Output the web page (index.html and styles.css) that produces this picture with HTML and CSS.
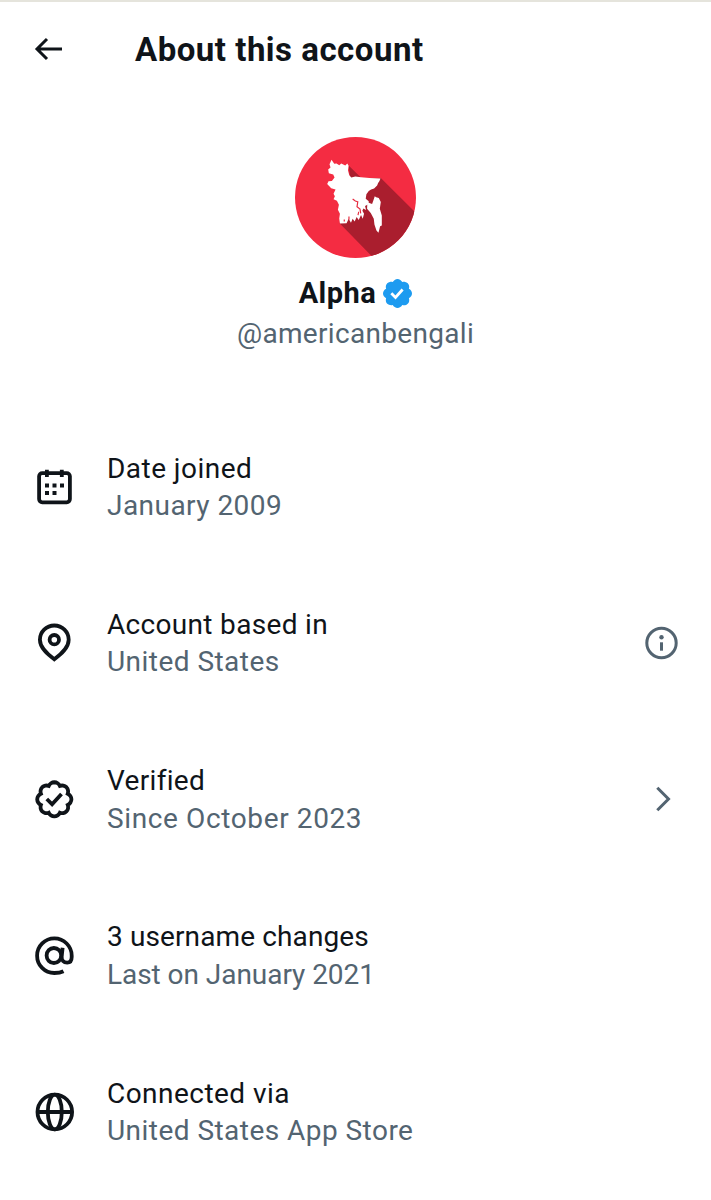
FILE: index.html
```
<!DOCTYPE html>
<html lang="en">
<head>
  <meta charset="UTF-8" />
  <title>About this account</title>
  <link rel="stylesheet" href="styles.css">
</head>
<body>

  <header class="top-bar">
    <svg class="back" viewBox="0 0 30 28"><path d="M13 4L3 14l10 10M3 14h25"/></svg>
    <h1>About this account</h1>
  </header>

  <section class="profile">
    <svg class="avatar" viewBox="30 27 361 361">
      <defs><clipPath id="round"><circle cx="210.500" cy="207.500" r="180.500"/></clipPath></defs>
      <g clip-path="url(#round)">
        <rect x="30" y="27" width="361" height="361" fill="#f42c42"/>
        <path d="M190 112L228 149H286L400 263V400H276L163 284L200 200z" fill="#aa1e2e"/>
      </g>
      <g transform="translate(102 66)">
        <path fill="#fff" d="M37 29L45 41L52 40L60 45L66 40L78 46L84 40L88 47L86 60L90 75L96 82L108 79L125 81L150 83L183 85L180 92L176 98L173 106L164 115L155 118L148 122L141 132L139 145L148 153L147 162L137 167L140 179L132 174L129 181L134 190L130 205L125 194L118 209L112 200L106 213L100 205L95 217L88 205L82 218L62 219L60 204L62 190L56 178L59 163L53 151L43 147L47 138L43 130L49 118L36 114L24 101L28 93L38 92L46 82L42 73L29 69L27 58L34 52L31 42z"/>
        <path fill="#fff" d="M144 156L158 161L162 150L166 138L170 141L178 143L184 155L181 175L187 195L187 225L182 227L177 247L171 240L165 222L163 205L154 188L143 175z"/>
        <path fill="none" stroke="#e62a3e" stroke-width="3.500" d="M100 146l8 6 9 3M115 156l-2 13 9 7 2 13M118 184l-2 10M89 198v10M75 207v6"/>
      </g>
    </svg>
    <div class="name">
      <span>Alpha</span>
      <svg class="badge" viewBox="1.600 1.600 18.800 18.800">
        <path fill="#1d9bf0" d="M20.396 11c-.018-.646-.215-1.275-.57-1.816-.354-.54-.852-.972-1.438-1.246.223-.607.27-1.264.14-1.897-.131-.634-.437-1.218-.882-1.687-.47-.445-1.053-.75-1.687-.882-.633-.13-1.29-.083-1.897.14-.273-.587-.704-1.086-1.245-1.44S11.647 1.620 11 1.604c-.646.017-1.273.213-1.813.568s-.969.854-1.240 1.440c-.608-.223-1.267-.272-1.902-.14-.635.13-1.220.436-1.690.882-.445.470-.749 1.055-.878 1.688-.13.633-.08 1.290.144 1.896-.587.274-1.087.705-1.443 1.245-.356.540-.555 1.170-.574 1.817.02.647.218 1.276.574 1.817.356.540.856.972 1.443 1.245-.224.606-.274 1.263-.144 1.896.13.634.433 1.218.877 1.688.470.443 1.054.747 1.687.878.633.132 1.290.084 1.897-.136.274.586.705 1.084 1.246 1.439.540.354 1.170.551 1.816.569.647-.016 1.276-.213 1.817-.567s.972-.854 1.245-1.440c.604.239 1.266.296 1.903.164.636-.132 1.220-.447 1.680-.907.460-.460.776-1.044.908-1.681s.075-1.299-.165-1.903c.586-.274 1.084-.705 1.439-1.246.354-.540.551-1.170.569-1.816z"/>
        <path fill="none" stroke="#fff" stroke-width="1.800" d="M7 10.900l2.700 2.700 4.600-5.200"/>
      </svg>
    </div>
    <div class="handle">@americanbengali</div>
  </section>

  <main class="rows">
    <div class="row">
      <svg class="icon" viewBox="0 0 44 44">
        <rect x="7.100" y="8.100" width="30.800" height="29.200" rx="3.200"/>
        <path d="M14.900 4.700v7.300M29.800 4.700v7.300"/>
        <path class="solid" d="M13 18.600h4v4h-4zM20.500 18.600h4v4h-4zM28 18.600h4v4h-4zM13 26.100h4v4h-4zM20.500 26.100h4v4h-4z"/>
      </svg>
      <div class="text">
        <div class="label wide">Date joined</div>
        <div class="value wide">January 2009</div>
      </div>
    </div>

    <div class="row">
      <svg class="icon" viewBox="0 0 44 44">
        <path d="M22.300 38.300C16 33.500 7.900 27 7.900 18.700a14.400 14.200 0 0 1 28.800 0C36.700 27 28.600 33.500 22.300 38.300z"/>
        <circle cx="22.300" cy="18.700" r="4.700"/>
      </svg>
      <div class="text">
        <div class="label">Account based in</div>
        <div class="value wide">United States</div>
      </div>
      <svg class="end" viewBox="0 0 34 34">
        <circle cx="16.500" cy="17" r="14.700"/>
        <circle class="dot" cx="16.500" cy="11.200" r="2.200"/>
        <path d="M16.500 16.300v8.400"/>
      </svg>
    </div>

    <div class="row">
      <svg class="icon" viewBox="0 0 44 44">
        <path transform="translate(2.300 1.300) scale(1.820)" stroke-width="2.100" d="M20.396 11c-.018-.646-.215-1.275-.57-1.816-.354-.54-.852-.972-1.438-1.246.223-.607.27-1.264.14-1.897-.131-.634-.437-1.218-.882-1.687-.47-.445-1.053-.75-1.687-.882-.633-.13-1.29-.083-1.897.14-.273-.587-.704-1.086-1.245-1.44S11.647 1.620 11 1.604c-.646.017-1.273.213-1.813.568s-.969.854-1.240 1.440c-.608-.223-1.267-.272-1.902-.14-.635.13-1.220.436-1.690.882-.445.470-.749 1.055-.878 1.688-.13.633-.08 1.290.144 1.896-.587.274-1.087.705-1.443 1.245-.356.540-.555 1.170-.574 1.817.02.647.218 1.276.574 1.817.356.540.856.972 1.443 1.245-.224.606-.274 1.263-.144 1.896.13.634.433 1.218.877 1.688.470.443 1.054.747 1.687.878.633.132 1.290.084 1.897-.136.274.586.705 1.084 1.246 1.439.540.354 1.170.551 1.816.569.647-.016 1.276-.213 1.817-.567s.972-.854 1.245-1.440c.604.239 1.266.296 1.903.164.636-.132 1.220-.447 1.680-.907.460-.460.776-1.044.908-1.681s.075-1.299-.165-1.903c.586-.274 1.084-.705 1.439-1.246.354-.540.551-1.170.569-1.816z"/>
        <path d="M14.800 21l5.300 5.300 9.400-10.300"/>
      </svg>
      <div class="text">
        <div class="label">Verified</div>
        <div class="value wider">Since October 2023</div>
      </div>
      <svg class="end" viewBox="0 0 34 34"><path d="M12.300 4.700l11.200 11.300-11.200 11.300"/></svg>
    </div>

    <div class="row">
      <svg class="icon" viewBox="0 0 44 44">
        <path d="M31.500 37.200C29 38.500 25.800 39 22.300 39A17.300 17.300 0 1 1 39.700 21.700v1.400c0 3.600-1.600 5.600-4.500 5.600-3.600 0-5.900-2.400-5.500-6.400l.9-8.600"/>
        <ellipse cx="21.900" cy="21.500" rx="7.300" ry="7.500"/>
      </svg>
      <div class="text">
        <div class="label narrow">3 username changes</div>
        <div class="value tight">Last on January 2021</div>
      </div>
    </div>

    <div class="row">
      <svg class="icon" viewBox="0 0 44 44">
        <circle cx="22.800" cy="22" r="17.300"/>
        <ellipse cx="22.800" cy="22" rx="7" ry="17.300"/>
        <path d="M5.500 22H40"/>
      </svg>
      <div class="text">
        <div class="label wide">Connected via</div>
        <div class="value wide">United States App Store</div>
      </div>
    </div>
  </main>

</body>
</html>
```
FILE: styles.css
```
* {
  box-sizing: border-box;
}
body {
  margin: 0;
  height: 1200px;
  overflow: hidden;
  background: #fff;
  border-top: 2px solid #e5e4dc;
  color: #0f1419;
  font-family: Roboto, "Liberation Sans", sans-serif;
  font-size: 28px;
}
svg {
  display: block;
  flex: none;
  overflow: visible;
}
.top-bar {
  display: flex;
  align-items: center;
  height: 94px;
  padding-left: 34px;
}
.back {
  width: 30px;
  height: 28px;
  fill: none;
  stroke: #0f1419;
  stroke-width: 3;
}
h1 {
  margin: 0 0 0 71px;
  font-size: 33px;
  font-weight: 700;
  letter-spacing: 0.500px;
}
.profile {
  display: flex;
  flex-direction: column;
  align-items: center;
  height: 313px;
  padding-top: 41px;
}
.avatar {
  width: 121px;
  height: 121px;
}
.name {
  display: flex;
  align-items: center;
  gap: 7px;
  height: 40px;
  margin-top: 15px;
  font-size: 29px;
  font-weight: 700;
  letter-spacing: 0.500px;
}
.badge {
  width: 29px;
  height: 29px;
}
.handle {
  margin-top: 1px;
  line-height: 40px;
  letter-spacing: 0.320px;
  color: #536471;
}
.row {
  display: flex;
  align-items: center;
  height: 156.300px;
  padding: 0 32px;
}
.icon {
  width: 44px;
  height: 44px;
  fill: none;
  stroke: #0f1419;
  stroke-width: 3.800;
}
.solid {
  fill: #0f1419;
  stroke: none;
}
.text {
  flex: 1;
  margin-left: 31px;
  line-height: 37.600px;
  letter-spacing: 0.320px;
  white-space: nowrap;
}
.value {
  color: #536471;
}
.wide {
  letter-spacing: 0.460px;
}
.wider {
  letter-spacing: 0.620px;
}
.narrow {
  letter-spacing: 0.120px;
}
.tight {
  letter-spacing: -0.050px;
}
.end {
  width: 34px;
  height: 34px;
  fill: none;
  stroke: #536471;
  stroke-width: 3;
}
.dot {
  fill: #536471;
  stroke: none;
}
```
